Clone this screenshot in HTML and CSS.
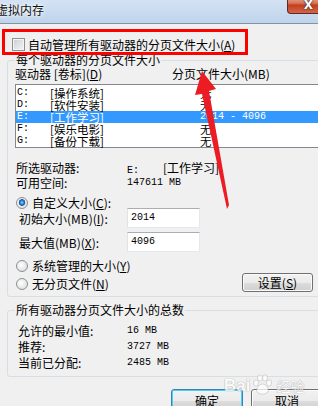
FILE: index.html
```html
<!DOCTYPE html>
<html lang="zh-CN">
<head>
<meta charset="utf-8">
<title>虚拟内存</title>
<link rel="stylesheet" href="styles.css">
</head>
<body>
<div class="win">
  <div class="titlebar">
    <span class="title">虚拟内存</span>
    <div class="close"><span>X</span></div>
  </div>
  <div class="client">
    <div class="auto-row"><span class="checkbox"></span><span>自动管理所有驱动器的分页文件大小(<u>A</u>)</span></div>

    <fieldset class="group g1">
      <legend>每个驱动器的分页文件大小</legend>
      <div class="list-head"><span class="c1">驱动器 [卷标](<u>D</u>)</span><span class="c2">分页文件大小(MB)</span></div>
      <div class="listbox">
        <div class="row"><span class="drv m">C:</span><span class="vol">[操作系统]</span><span class="size">无</span></div>
        <div class="row"><span class="drv m">D:</span><span class="vol">[软件安装]</span><span class="size">无</span></div>
        <div class="row sel"><span class="drv m">E:</span><span class="vol">[工作学习]</span><span class="size m">2014 - 4096</span></div>
        <div class="row"><span class="drv m">F:</span><span class="vol">[娱乐电影]</span><span class="size">无</span></div>
        <div class="row"><span class="drv m">G:</span><span class="vol">[备份下载]</span><span class="size">无</span></div>
      </div>
      <div class="info">
        <div class="info-row"><span class="k">所选驱动器:</span><span class="v"><span class="m pre">E:    </span>[工作学习]</span></div>
        <div class="info-row"><span class="k">可用空间:</span><span class="v m">147611 MB</span></div>
      </div>
      <div class="radio-row custom"><span class="radio checked"></span><span>自定义大小(<u>C</u>):</span></div>
      <div class="field"><span class="k">初始大小(MB)(<u>I</u>):</span><span class="input m">2014</span></div>
      <div class="field"><span class="k">最大值(MB)(<u>X</u>):</span><span class="input m">4096</span></div>
      <div class="bottom">
        <div class="radios">
          <div class="radio-row"><span class="radio"></span><span>系统管理的大小(<u>Y</u>)</span></div>
          <div class="radio-row"><span class="radio"></span><span>无分页文件(<u>N</u>)</span></div>
        </div>
        <button class="btn set">设置(<u>S</u>)</button>
      </div>
    </fieldset>

    <fieldset class="group g2">
      <legend>所有驱动器分页文件大小的总数</legend>
      <div class="sum-row"><span class="k">允许的最小值:</span><span class="m">16 MB</span></div>
      <div class="sum-row"><span class="k">推荐:</span><span class="m">3727 MB</span></div>
      <div class="sum-row"><span class="k">当前已分配:</span><span class="m">2485 MB</span></div>
    </fieldset>

    <div class="actions">
      <button class="btn default">确定</button>
      <button class="btn">取消</button>
    </div>
  </div>

  <div class="redbox"></div>
  <svg class="arrow" width="330" height="406" viewBox="0 0 330 406">
    <polygon points="202,71 216,89 209,91 229,205 227,209 202,94 195,95" fill="#ec1c24"/>
  </svg>
  <div class="watermark"><span class="wm-bai">Bai</span><svg class="paw" width="22" height="22" viewBox="0 0 22 22"><ellipse cx="5" cy="9" rx="2.5" ry="3.2"/><ellipse cx="9" cy="4" rx="2.5" ry="3.2"/><ellipse cx="14" cy="4" rx="2.5" ry="3.2"/><ellipse cx="18" cy="9" rx="2.5" ry="3.2"/><path d="M11.5 10 C7 10 4 17 7 19 C9 20.5 14 20.5 16 19 C19 17 16 10 11.5 10 Z"/></svg><span class="wm-jy">经验</span></div>
</div>
</body>
</html>
```

FILE: styles.css
```css
html, body {
  margin: 0;
  width: 318px;
  height: 406px;
  overflow: hidden;
  background: #f0f0f0;
}
body {
  font-family: "Noto Sans CJK SC", "Noto Sans", sans-serif;
  font-size: 12px;
  color: #000;
}
u { text-decoration: underline; }
.m {
  font-family: "Liberation Mono", monospace;
  font-size: 10px;
}
.pre { white-space: pre; }

.win {
  width: 330px;
  position: relative;
}

/* title bar */
.titlebar {
  height: 24px;
  box-sizing: border-box;
  background: linear-gradient(#d4e3f4, #bfd3ea);
  border-bottom: 1px solid #8193a8;
  display: flex;
  align-items: flex-start;
  justify-content: space-between;
}
.title {
  margin: 3px 0 0 -4px;
  line-height: 14px;
  color: #111;
  text-shadow: 0 0 3px #fff, 0 0 5px #fff;
}
.close {
  width: 43px;
  height: 18px;
  margin-top: -4px;
  box-sizing: border-box;
  border: 1px solid #5d2a22;
  border-top: none;
  border-radius: 0 0 4px 4px;
  background: linear-gradient(#eab0a3 0%, #d8785f 40%, #c3401f 55%, #d2664d 100%);
  display: flex;
  align-items: center;
  justify-content: center;
  color: #fff;
  font: bold 12px "DejaVu Sans", sans-serif;
  text-shadow: 0 0 1px #222, 0 0 2px #333;
}

/* client area */
.client {
  padding: 0 7px;
}
.auto-row {
  display: flex;
  align-items: center;
  gap: 3px;
  height: 17px;
  margin-top: 12px;
  padding-left: 5px;
  line-height: 17px;
}
.checkbox {
  width: 13px;
  height: 13px;
  box-sizing: border-box;
  border: 1px solid #8e8f8f;
  background: linear-gradient(135deg, #c9cdd3, #f5f5f5);
  box-shadow: inset 0 0 0 1px #f4f4f4;
  flex: none;
}

.group {
  margin: 0;
  border: 1px solid #d5dfe5;
  border-radius: 3px;
  padding: 0 9px 4px 7px;
  min-width: 0;
}
.group legend {
  padding: 0 1px;
  line-height: 14px;
  height: 14px;
}

.list-head {
  display: flex;
  height: 13px;
  line-height: 13px;
}
.list-head .c1 { width: 157px; }

.listbox {
  margin-top: 4px;
  margin-right: -12px;
  background: #fff;
  border: 1px solid #828790;
  padding-top: 2px;
}
.row {
  display: flex;
  align-items: center;
  height: 12px;
  line-height: 12px;
  padding-left: 1px;
  font-size: 11.5px;
}
.row.sel {
  background: #3399ff;
  color: #fff;
}
.drv { width: 33px; }
.vol { width: 150px; }

.info { margin-top: 12px; }
.info-row {
  display: flex;
  height: 15px;
  line-height: 15px;
  padding-left: 1px;
}
.info-row .k { width: 111px; }

.radio-row {
  display: flex;
  align-items: center;
  gap: 4px;
  height: 16px;
  line-height: 16px;
  padding-left: 1px;
}
.radio-row.custom {
  height: 10px;
  margin-top: 8px;
}
.radio {
  width: 12px;
  height: 12px;
  box-sizing: border-box;
  border-radius: 50%;
  border: 1px solid #8e8f8f;
  background: radial-gradient(circle at 40% 40%, #ffffff, #d3d6db);
  flex: none;
}
.radio.checked {
  background:
    radial-gradient(circle at 50% 45%, #a9dcff 0, #2f8fe6 1.5px, #17559f 3px, rgba(0,0,0,0) 3.6px),
    radial-gradient(circle at 40% 40%, #ffffff, #d3d6db);
}

.field {
  display: flex;
  align-items: center;
  height: 20px;
  padding-left: 4px;
}
.field + .field { margin-top: 4px; }
.field .k { width: 108px; }
.input {
  width: 73px;
  height: 20px;
  box-sizing: border-box;
  background: #fff;
  border: 1px solid #e3e9ef;
  border-top-color: #abadb3;
  border-left-color: #e2e3ea;
  padding-left: 3px;
  line-height: 18px;
}

.bottom {
  display: flex;
  justify-content: space-between;
  align-items: flex-end;
  margin-top: 6px;
}
.radios {
  display: flex;
  flex-direction: column;
  gap: 2px;
}

.btn {
  font: inherit;
  color: #000;
  padding: 0;
  border: 1px solid #707070;
  border-radius: 3px;
  background: linear-gradient(#f2f2f2 0%, #ebebeb 50%, #dddddd 51%, #cfcfcf 100%);
  box-shadow: inset 0 0 0 1px #fbfbfb;
}
.btn.set {
  width: 71px;
  height: 19px;
  line-height: 15px;
}

.g2 {
  margin-top: 6px;
  padding-top: 6px;
  padding-bottom: 5px;
}
.sum-row {
  display: flex;
  height: 16px;
  line-height: 16px;
  padding-left: 3px;
}
.sum-row .k { width: 109px; }

.actions {
  display: flex;
  justify-content: flex-end;
  gap: 8px;
  margin-top: 12px;
}
.actions .btn {
  width: 72px;
  height: 23px;
  line-height: 17px;
}
.btn.default {
  border-color: #3c7fb1;
  box-shadow: inset 0 0 0 1px #48d1f7;
}

/* annotations */
.redbox {
  position: absolute;
  left: 2px;
  top: 29px;
  width: 246px;
  height: 26px;
  box-sizing: border-box;
  border: 3px solid #ff0000;
}
.arrow {
  position: absolute;
  left: 0;
  top: 0;
  pointer-events: none;
}
.watermark {
  position: absolute;
  left: 224px;
  top: 374px;
  display: flex;
  align-items: flex-end;
  gap: 1px;
  opacity: 0.75;
  pointer-events: none;
}
.wm-bai {
  font: bold 17px "Liberation Sans", sans-serif;
  color: #fff;
  text-shadow: 0 0 1px #999, 0 0 1px #999;
}
.paw { fill: #fff; stroke: #aaa; stroke-width: 0.6; }
.wm-jy {
  font-size: 14px;
  color: #fff;
  text-shadow: 0 0 1px #999, 0 0 1px #999;
  margin-left: 2px;
}
```
